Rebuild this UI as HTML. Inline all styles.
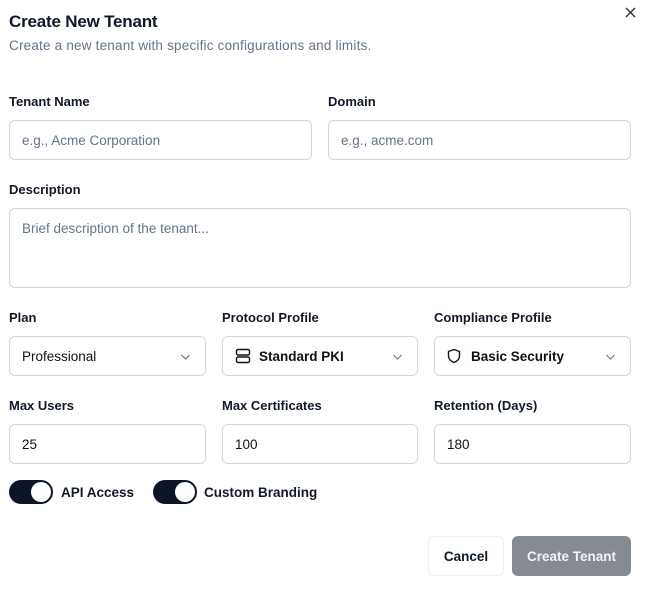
<!DOCTYPE html>
<html><head><style>
*{box-sizing:border-box;margin:0;padding:0}
body{width:649px;height:591px;background:#fff;font-family:"Liberation Sans",sans-serif;color:#0f172a;position:relative;overflow:hidden}
.a{position:absolute}
.t{font-size:17px;font-weight:600;left:9px;top:12px;letter-spacing:-0.2px}
.s{font-size:13.5px;color:#64748b;left:9px;top:38px;letter-spacing:0.2px}
.l{font-size:13px;font-weight:bold;color:#111827}
.i{border:1px solid #cbd5e1;border-radius:6px;height:40px;font-size:13.5px;display:flex;align-items:center;padding-left:12px;color:#111}
.ph{color:#64748b}
.ch{position:absolute;right:14px;top:14px}
.tg{width:44px;height:24px;border-radius:12px;background:#0b1526}
.tg::after{content:"";position:absolute;right:2px;top:2px;width:20px;height:20px;border-radius:50%;background:#fff}
</style></head><body>
<div class="a t">Create New Tenant</div>
<div class="a s">Create a new tenant with specific configurations and limits.</div>
<svg class="a" style="left:625px;top:7px" width="11" height="11" viewBox="0 0 11 11"><path d="M1 1L10 10M10 1L1 10" stroke="#333" stroke-width="1.4"/></svg>

<div class="a l" style="left:9px;top:94px">Tenant Name</div>
<div class="a l" style="left:328px;top:94px">Domain</div>
<div class="a i ph" style="left:9px;top:120px;width:303px">e.g., Acme Corporation</div>
<div class="a i ph" style="left:328px;top:120px;width:303px">e.g., acme.com</div>

<div class="a l" style="left:9px;top:182px">Description</div>
<div class="a i ph" style="left:9px;top:208px;width:622px;height:80px;align-items:flex-start;padding-top:12px">Brief description of the tenant...</div>

<div class="a l" style="left:9px;top:310px">Plan</div>
<div class="a l" style="left:222px;top:310px">Protocol Profile</div>
<div class="a l" style="left:434px;top:310px">Compliance Profile</div>
<div class="a i" style="left:9px;top:336px;width:197px">Professional<svg class="ch" width="11" height="11" viewBox="0 0 11 11"><path d="M1.5 4l4 4 4-4" fill="none" stroke="#777" stroke-width="1.2"/></svg></div>
<div class="a i" style="left:222px;top:336px;width:196px;font-weight:bold"><svg width="16" height="16" viewBox="0 0 16 16" style="margin-right:8px"><rect x="1.5" y="1.5" width="13" height="5.5" rx="1.5" fill="none" stroke="#111" stroke-width="1.4"/><rect x="1.5" y="9" width="13" height="5.5" rx="1.5" fill="none" stroke="#111" stroke-width="1.4"/><path d="M4 4.2h.1M4 11.8h.1" stroke="#111" stroke-width="1.6"/></svg>Standard PKI<svg class="ch" width="11" height="11" viewBox="0 0 11 11"><path d="M1.5 4l4 4 4-4" fill="none" stroke="#777" stroke-width="1.2"/></svg></div>
<div class="a i" style="left:434px;top:336px;width:197px;font-weight:bold"><svg width="14" height="16" viewBox="0 0 14 16" style="margin-right:10px"><path d="M7 1.5L12.5 3.5V8c0 3-2.5 5.3-5.5 6.5C4 13.3 1.5 11 1.5 8V3.5z" fill="none" stroke="#111" stroke-width="1.4" stroke-linejoin="round"/></svg>Basic Security<svg class="ch" width="11" height="11" viewBox="0 0 11 11"><path d="M1.5 4l4 4 4-4" fill="none" stroke="#777" stroke-width="1.2"/></svg></div>

<div class="a l" style="left:9px;top:398px">Max Users</div>
<div class="a l" style="left:222px;top:398px">Max Certificates</div>
<div class="a l" style="left:434px;top:398px">Retention (Days)</div>
<div class="a i" style="left:9px;top:424px;width:197px">25</div>
<div class="a i" style="left:222px;top:424px;width:196px">100</div>
<div class="a i" style="left:434px;top:424px;width:197px">180</div>

<div class="a tg" style="left:9px;top:480px"></div>
<div class="a l" style="left:61px;top:485px;font-size:13.5px">API Access</div>
<div class="a tg" style="left:153px;top:480px"></div>
<div class="a l" style="left:204px;top:485px;font-size:13.5px">Custom Branding</div>

<div class="a" style="left:428px;top:536px;width:76px;height:40px;border:1px solid #eef0f3;border-radius:6px;font-size:13.5px;font-weight:bold;display:flex;align-items:center;justify-content:center">Cancel</div>
<div class="a" style="left:512px;top:536px;width:119px;height:40px;background:#868a93;border-radius:6px;color:#f1f2f4;font-size:13.5px;font-weight:bold;display:flex;align-items:center;justify-content:center">Create Tenant</div>
</body></html>
